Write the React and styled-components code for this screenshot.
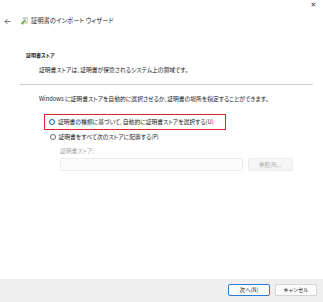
import styled, { createGlobalStyle } from "styled-components";

const GlobalStyle = createGlobalStyle`
  html, body {
    margin: 0;
    padding: 0;
    background: #ffffff;
  }
  body {
    font-family: "Noto Sans CJK JP", "Noto Sans", sans-serif;
    font-feature-settings: "palt";
    color: #1b1b1b;
  }
`;

const Window = styled.div`
  width: 323px;
  height: 302px;
  display: flex;
  flex-direction: column;
  background: #ffffff;
  overflow: hidden;
`;

const TopBar = styled.div`
  height: 14px;
  flex: none;
  display: flex;
  justify-content: flex-end;
  align-items: flex-start;
  padding: 1px 5px 0 0;
  box-sizing: border-box;
`;

const CloseButton = styled.div`
  width: 9px;
  height: 9px;
  font-family: "DejaVu Sans", sans-serif;
  font-size: 7px;
  line-height: 9px;
  text-align: center;
  color: #3a3a3a;
`;

const Header = styled.div`
  height: 14px;
  flex: none;
  display: flex;
  align-items: center;
  padding-left: 4px;
`;

const BackArrow = styled.svg`
  width: 7px;
  height: 7px;
  margin-right: 10px;
`;

const WizardIcon = styled.svg`
  width: 7px;
  height: 8px;
  margin-right: 3px;
`;

const Title = styled.div`
  font-size: 6.3px;
  line-height: 8px;
  white-space: nowrap;
`;

const Body = styled.div`
  padding-left: 20px;
  padding-right: 10px;
`;

const Heading = styled.div`
  margin-top: 23px;
  padding-left: 6px;
  font-size: 5px;
  line-height: 8px;
  font-weight: 700;
`;

const Text = styled.div`
  margin-top: ${(p) => p.$gap}px;
  padding-left: ${(p) => p.$indent}px;
  font-size: 5.8px;
  line-height: 8px;
  white-space: nowrap;
  color: ${(p) => (p.$muted ? "#a6a6a6" : "#1b1b1b")};
`;

const Divider = styled.div`
  margin-top: 10px;
  height: 1px;
  background: #cdcdcd;
`;

const Options = styled.div`
  margin-top: 11px;
  padding-left: 24px;
  display: flex;
  flex-direction: column;
  align-items: flex-start;
  gap: 2px;
`;

const Option = styled.div`
  box-sizing: border-box;
  display: flex;
  align-items: center;
  gap: 3px;
  height: ${(p) => (p.$selected ? 16 : 10)}px;
  width: ${(p) => (p.$selected ? "182px" : "auto")};
  padding-left: 4px;
  border: ${(p) => (p.$selected ? "1.6px solid #e0242e" : "none")};
  font-size: 5.8px;
  line-height: 8px;
  white-space: nowrap;
`;

const Radio = styled.span`
  box-sizing: border-box;
  width: 6px;
  height: 6px;
  border-radius: 50%;
  flex: none;
  margin-left: ${(p) => (p.$checked ? 0 : 1.5)}px;
  border: ${(p) => (p.$checked ? "1.7px solid #0062b8" : "0.8px solid #6b6b6b")};
  background: #ffffff;
`;

const StoreRow = styled.div`
  margin-top: 3px;
  padding-left: 40px;
  display: flex;
  gap: 5px;
`;

const Input = styled.div`
  box-sizing: border-box;
  width: 183px;
  height: 13px;
  border: 1px solid #ececec;
  border-radius: 2px;
  background: #fcfcfc;
`;

const BrowseButton = styled.div`
  box-sizing: border-box;
  width: 45px;
  height: 13px;
  border: 1px solid #ececec;
  border-radius: 2px;
  background: #f6f6f6;
  color: #a6a6a6;
  font-size: 5.5px;
  display: flex;
  align-items: center;
  justify-content: center;
`;

const Footer = styled.div`
  margin-top: auto;
  height: 23px;
  flex: none;
  background: #efefef;
  display: flex;
  justify-content: flex-end;
  align-items: flex-start;
  gap: 5px;
  padding: 5px 6px 0 0;
  box-sizing: border-box;
`;

const Button = styled.div`
  box-sizing: border-box;
  width: 42px;
  height: 12px;
  border-radius: 2px;
  background: #fdfdfd;
  border: 1px solid ${(p) => (p.$primary ? "#2b7bd0" : "#d4d4d4")};
  font-size: 5.5px;
  display: flex;
  align-items: center;
  justify-content: center;
  white-space: nowrap;
`;

export default function App() {
  return (
    <>
      <GlobalStyle />
      <Window>
        <TopBar>
          <CloseButton>✕</CloseButton>
        </TopBar>
        <Header>
          <BackArrow viewBox="0 0 7 7">
            <path d="M6.5 3.5 H1 M3.5 1 L1 3.5 L3.5 6" stroke="#404040" strokeWidth="0.7" fill="none" />
          </BackArrow>
          <WizardIcon viewBox="0 0 7 8">
            <rect x="2" y="0.5" width="4.5" height="5.5" fill="#f4f1e4" stroke="#a9a48a" strokeWidth="0.4" />
            <rect x="3" y="1.5" width="2.5" height="0.6" fill="#6b9ad6" />
            <path d="M4.5 3 L1.2 6.3" stroke="#43a63c" strokeWidth="1.2" />
            <path d="M0.5 4.8 L0.5 7.3 L3 7.3 Z" fill="#43a63c" />
            <circle cx="5" cy="5.6" r="0.9" fill="#e3b23c" />
          </WizardIcon>
          <Title>証明書のインポート ウィザード</Title>
        </Header>
        <Body>
          <Heading>証明書ストア</Heading>
          <Text $gap={7} $indent={19}>
            証明書ストアは、証明書が保管されるシステム上の領域です。
          </Text>
          <Divider />
          <Text $gap={10} $indent={19}>
            Windows に証明書ストアを自動的に選択させるか、証明書の場所を指定することができます。
          </Text>
          <Options>
            <Option $selected>
              <Radio $checked />
              証明書の種類に基づいて、自動的に証明書ストアを選択する(U)
            </Option>
            <Option>
              <Radio />
              証明書をすべて次のストアに配置する(P)
            </Option>
          </Options>
          <Text $gap={5} $indent={40} $muted>
            証明書ストア:
          </Text>
          <StoreRow>
            <Input />
            <BrowseButton>参照(R)...</BrowseButton>
          </StoreRow>
        </Body>
        <Footer>
          <Button $primary>次へ(N)</Button>
          <Button>キャンセル</Button>
        </Footer>
      </Window>
    </>
  );
}
